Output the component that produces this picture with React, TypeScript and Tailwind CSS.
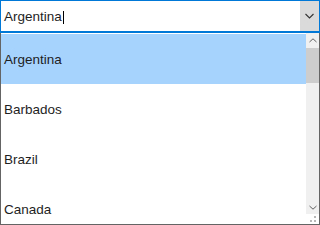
import React from "react";

const items = ["Argentina", "Barbados", "Brazil", "Canada"];

export default function App() {
  return (
    <div className="w-[320px] h-[225px] flex flex-col bg-white overflow-hidden" style={{ fontFamily: '"Liberation Sans", Arial, sans-serif' }}>
      <div className="h-[33px] flex border border-b-2 border-[#0078d7] bg-white">
        <div className="flex-1 flex items-center pl-[3px] pt-[2px] text-[13.5px] text-[#1e1e1e]">
          <span>Argentina</span>
          <span className="w-px h-[13px] bg-black ml-px" />
        </div>
        <div className="w-[19px] bg-[#dadada] flex items-center justify-center">
          <svg width="9" height="6" viewBox="0 0 9 6">
            <polyline points="0.5,1 4.5,5 8.5,1" fill="none" stroke="#333" strokeWidth="1.1" />
          </svg>
        </div>
      </div>
      <div className="flex-1 flex border-x border-b border-[#646464] min-h-0">
        <div className="flex-1 flex flex-col pt-px">
          {items.map((it, i) => (
            <div
              key={it}
              className={
                i === 0
                  ? "h-[50px] shrink-0 flex items-center pl-[3px] pt-[2px] text-[13.5px] text-[#1e1e1e] bg-[#a6d3fe]"
                  : "h-[50px] shrink-0 flex items-center pl-[3px] pt-[2px] text-[13.5px] text-[#1e1e1e]"
              }
            >
              {it}
            </div>
          ))}
        </div>
        <div className="w-[13px] flex flex-col">
          <div className="h-[15px] bg-[#f0f0f0] flex items-center justify-center">
            <svg width="8" height="5" viewBox="0 0 8 5">
              <polyline points="0.5,4 4,0.8 7.5,4" fill="none" stroke="#606060" strokeWidth="1" />
            </svg>
          </div>
          <div className="h-[35px] bg-[#cdcdcd]" />
          <div className="flex-1 bg-[#f0f0f0]" />
          <div className="h-[14px] bg-[#f0f0f0] flex items-center justify-center">
            <svg width="8" height="5" viewBox="0 0 8 5">
              <polyline points="0.5,1 4,4.2 7.5,1" fill="none" stroke="#606060" strokeWidth="1" />
            </svg>
          </div>
          <div className="h-[10px] bg-white relative">
            <span className="absolute w-[2px] h-[2px] bg-[#b8b8b8] left-[8px] top-[2px]" />
            <span className="absolute w-[2px] h-[2px] bg-[#b8b8b8] left-[4px] top-[6px]" />
            <span className="absolute w-[2px] h-[2px] bg-[#b8b8b8] left-[8px] top-[6px]" />
          </div>
        </div>
      </div>
    </div>
  );
}
